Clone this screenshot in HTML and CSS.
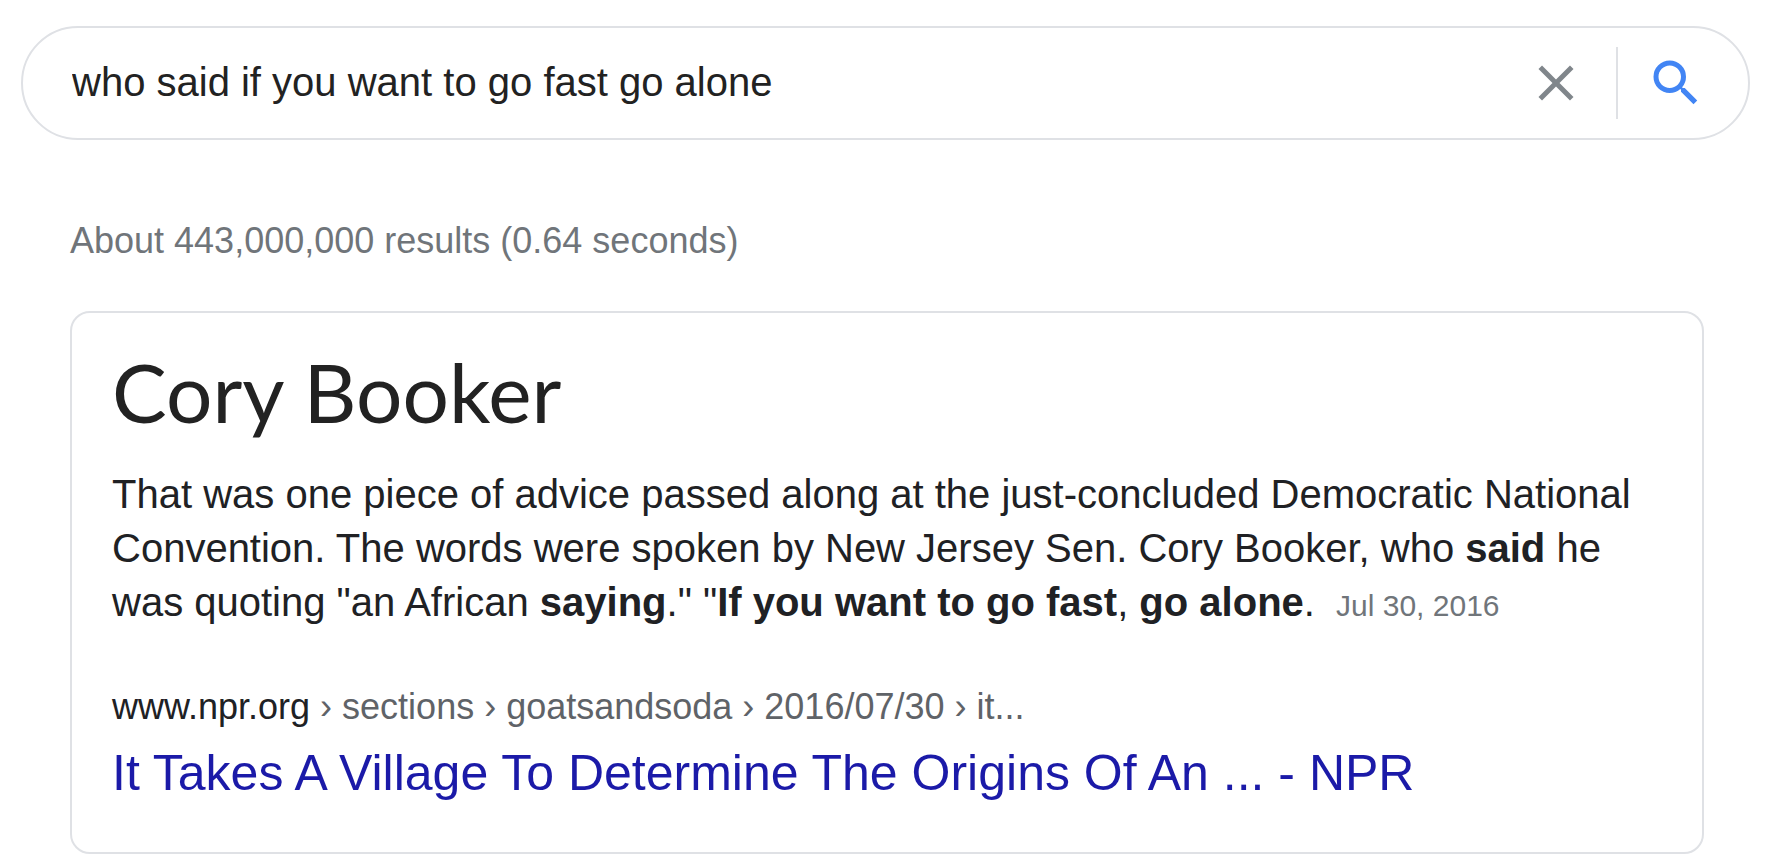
FILE: index.html
```html
<!DOCTYPE html>
<html lang="en">
<head>
    <meta charset="UTF-8">
    <meta name="viewport" content="width=device-width, initial-scale=1.0">
    <title>who said if you want to go fast go alone - Search</title>
    <link rel="stylesheet" href="styles.css">
</head>
<body>

<form class="search-bar" role="search">
    <input type="text" class="search-input" name="q" aria-label="Search" value="who said if you want to go fast go alone">
    <button type="reset" class="icon-button clear-button" aria-label="Clear">
        <svg viewBox="0 0 24 24"><path d="M19 6.41L17.59 5 12 10.59 6.41 5 5 6.41 10.59 12 5 17.59 6.41 19 12 13.41 17.59 19 19 17.59 13.41 12z"/></svg>
    </button>
    <span class="divider"></span>
    <button type="submit" class="icon-button search-button" aria-label="Search">
        <svg viewBox="0 0 24 24"><path d="M15.5 14h-.79l-.28-.27A6.471 6.471 0 0 0 16 9.5 6.5 6.5 0 1 0 9.5 16c1.61 0 3.09-.59 4.23-1.57l.27.28v.79l5 4.99L20.49 19l-4.99-5zm-6 0C7.01 14 5 11.99 5 9.5S7.01 5 9.5 5 14 7.01 14 9.5 11.99 14 9.5 14z"/></svg>
    </button>
</form>

<main class="results">
    <div class="result-stats">About 443,000,000 results (0.64 seconds)</div>

    <div class="card">
        <h1 class="answer">Cory Booker</h1>
        <p class="snippet">That was one piece of advice passed along at the just-concluded Democratic National Convention. The words were spoken by New Jersey Sen. Cory Booker, who <b>said</b> he was quoting "an African <b>saying</b>." "<b>If you want to go fast</b>, <b>go alone</b>. <span class="date">Jul 30, 2016</span></p>
        <div class="source">www.npr.org<span class="path"> › sections › goatsandsoda › 2016/07/30 › it...</span></div>
        <a href="#" class="result-link">It Takes A Village To Determine The Origins Of An ... - NPR</a>
    </div>
</main>

</body>
</html>
```
FILE: styles.css
```css
* {
    box-sizing: border-box;
}
body {
    font-family: Arial, "Liberation Sans", sans-serif;
    margin: 0;
    padding: 26px 26px 8px 21px;
    background-color: #fff;
    color: #202124;
}
.search-bar {
    display: flex;
    align-items: center;
    height: 114px;
    padding: 0 42px 0 49px;
    border: 2px solid #dfe1e5;
    border-radius: 57px;
}
.search-input {
    flex: 1;
    min-width: 0;
    padding: 0 0 2px;
    border: none;
    outline: none;
    background: none;
    font-family: inherit;
    font-size: 40px;
    color: #222;
}
.icon-button {
    width: 60px;
    height: 60px;
    padding: 0;
    border: none;
    background: none;
    cursor: pointer;
}
.icon-button svg {
    display: block;
    width: 60px;
    height: 60px;
}
.clear-button {
    fill: #80868b;
}
.search-button {
    fill: #4285f4;
}
.divider {
    width: 2px;
    height: 72px;
    margin: 0 28px 0 30px;
    background-color: #dfe1e5;
}
.results {
    padding: 81px 46px 0 49px;
}
.result-stats {
    font-size: 36px;
    line-height: 40px;
    color: #70757a;
}
.card {
    margin-top: 50px;
    padding: 30px 40px 47px;
    border: 2px solid #dfe1e5;
    border-radius: 20px;
}
.answer {
    margin: 0;
    font-family: Lato, sans-serif;
    font-size: 82px;
    font-weight: normal;
    line-height: 96px;
    color: #222;
}
.snippet {
    margin: 28px 0 54px;
    font-size: 40px;
    line-height: 54px;
}
.date {
    margin-left: 10px;
    font-size: 30px;
    color: #70757a;
}
.source {
    font-size: 36px;
    line-height: 40px;
}
.path {
    color: #5f6368;
}
.result-link {
    display: block;
    margin-top: 14px;
    font-size: 50px;
    line-height: 64px;
    color: #1b1aa8;
    text-decoration: none;
}
.result-link:hover {
    text-decoration: underline;
}
```
